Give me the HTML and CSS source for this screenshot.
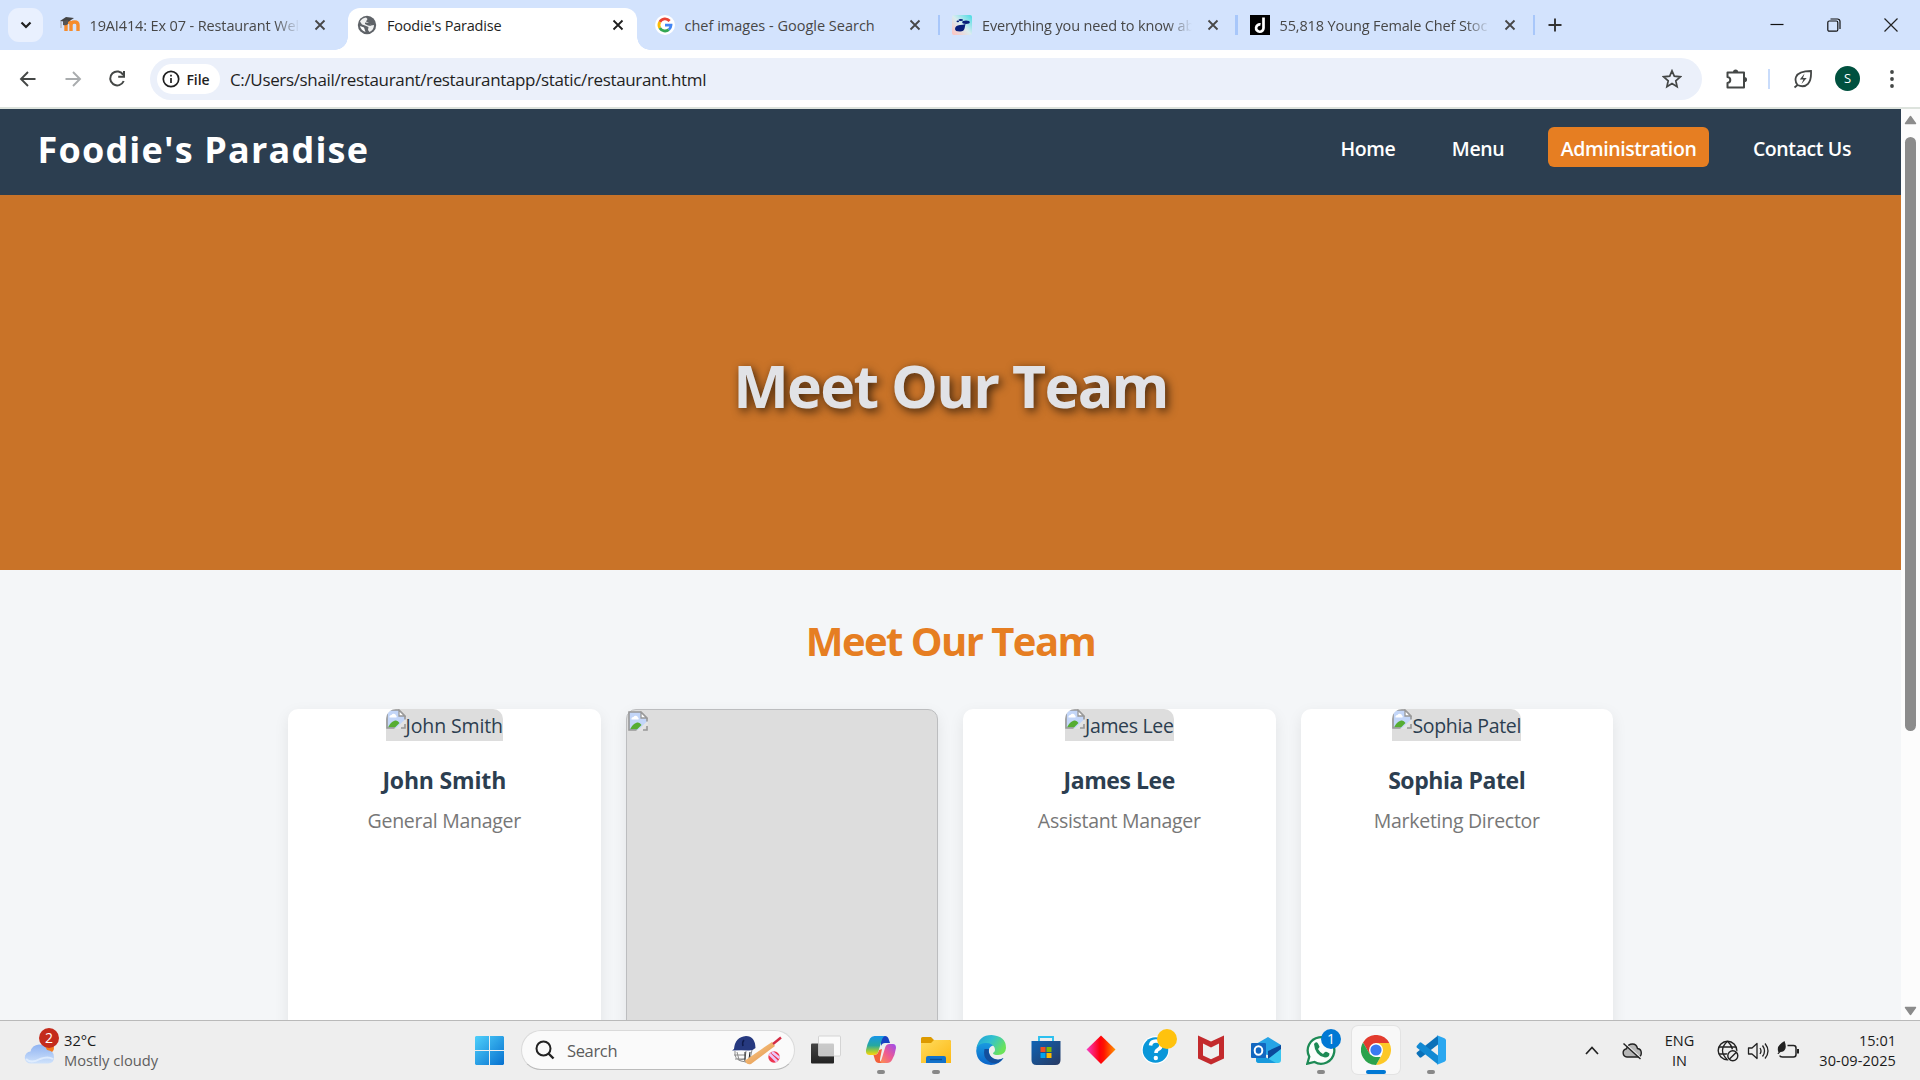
FILE: index.html
```html
<!DOCTYPE html>
<html lang="en">
<head>
<meta charset="utf-8">
<title>Foodie's Paradise</title>
<link rel="stylesheet" href="styles.css">
</head>
<body>
<svg class="defs" width="0" height="0" aria-hidden="true">
  <defs>
    <linearGradient id="win" x1="0" y1="0" x2="1" y2="1"><stop offset="0" stop-color="#4fd0fb"/><stop offset="1" stop-color="#0670cf"/></linearGradient>
    <linearGradient id="cloud" x1="0" y1="0" x2="0" y2="1"><stop offset="0" stop-color="#8fb3f2"/><stop offset="1" stop-color="#cfe2fb"/></linearGradient>
    <linearGradient id="fold" x1="0" y1="0" x2="1" y2="1"><stop offset="0" stop-color="#ffdc5e"/><stop offset="1" stop-color="#fdb813"/></linearGradient>
    <linearGradient id="cpA" x1="0" y1="0" x2="0" y2="1"><stop offset="0" stop-color="#1795e8"/><stop offset=".5" stop-color="#26a8a0"/><stop offset=".8" stop-color="#a5cc35"/><stop offset="1" stop-color="#ffd20a"/></linearGradient>
    <linearGradient id="cpB" x1="1" y1="0" x2="0" y2="1"><stop offset="0" stop-color="#9a4bf0"/><stop offset=".5" stop-color="#ee5a92"/><stop offset="1" stop-color="#ff9a44"/></linearGradient>
    <linearGradient id="edA" x1="0" y1="0" x2="1" y2=".5"><stop offset="0" stop-color="#1f9fd8"/><stop offset=".5" stop-color="#32c1cf"/><stop offset="1" stop-color="#6be35a"/></linearGradient>
    <linearGradient id="edB" x1="0" y1="0" x2="0" y2="1"><stop offset="0" stop-color="#1ba0e2"/><stop offset="1" stop-color="#0a63c9"/></linearGradient>
    <linearGradient id="store" x1="0" y1="0" x2="1" y2="1"><stop offset="0" stop-color="#0f63b5"/><stop offset="1" stop-color="#283a62"/></linearGradient>
    <linearGradient id="dia" x1="0" y1="0" x2="1" y2="0"><stop offset="0" stop-color="#f73ec8"/><stop offset=".45" stop-color="#ff0010"/><stop offset=".6" stop-color="#ff1500"/><stop offset="1" stop-color="#ff9500"/></linearGradient>
    <linearGradient id="dark" x1="0" y1="0" x2="0" y2="1"><stop offset="0" stop-color="#444"/><stop offset="1" stop-color="#222"/></linearGradient>
    <linearGradient id="paw" x1="0" y1="1" x2="1" y2="0"><stop offset="0" stop-color="#ffc0bd"/><stop offset=".5" stop-color="#d9ecf0"/><stop offset="1" stop-color="#45dbe3"/></linearGradient>
    <linearGradient id="bat" x1="0" y1="0" x2="1" y2="1"><stop offset="0" stop-color="#ffd08e"/><stop offset="1" stop-color="#de8e45"/></linearGradient>
    <symbol id="x" viewBox="0 0 12 12"><path d="M1.500 1.500l9 9M10.500 1.500l-9 9" stroke="currentColor" stroke-width="1.800" fill="none"/></symbol>
    <symbol id="broken" viewBox="0 0 20 20">
      <path d="M1 1h12l6 6v5l-7 7H1z" fill="#c3d6f8"/>
      <path d="M3.500 8.500a2 2 0 0 1 2-2.500 2.500 2.500 0 0 1 4.500.5 1.500 1.500 0 0 1 .5 2z" fill="#fff"/>
      <path d="M2 18.500C4 14 7.500 11.500 10 11.500q2 0 3.500 2.500L9 18.500z" fill="#56ad32"/>
      <path d="M9 20L20 9.500v4.500l-6 6z" fill="#e4e4e4"/>
      <path d="M8.500 19H1V1h12l6 6v3.500M19 15v4h-4" fill="none" stroke="#989898" stroke-width="1.600"/>
      <path d="M13 1.300v5.700h5.700z" fill="#fff" stroke="#989898" stroke-width="1.300"/>
    </symbol>
  </defs>
</svg>

<div class="screen">
  <header class="tabstrip">
    <button class="tab-search"><svg width="12" height="8" viewBox="0 0 12 8"><path d="M1.500 1.500L6 6l4.500-4.500" fill="none" stroke="#1f1f1f" stroke-width="2.200"/></svg></button>
    <div class="tabs">
      <div class="tab">
        <svg class="fav" viewBox="0 0 20 20"><path d="M5 17V11q0-3 2.500-3T10 11v6M10 17v-6q0-3 3.500-3t3.500 3v6" transform="translate(1 -1)" fill="none" stroke="#f68c2c" stroke-width="3.400"/><path d="M0 6l6-4 8 1-6 4z" fill="#444"/><path d="M3 6v4q3 1 5-1V5z" fill="#555"/><path d="M1 6v7" stroke="#999" stroke-width=".8"/></svg>
        <span class="label fade t1">19AI414: Ex 07 - Restaurant Wel</span><svg class="close"><use href="#x"/></svg>
      </div>
      <div class="tab active">
        <svg class="fav" viewBox="0 0 20 20"><circle cx="10" cy="10" r="9.200" fill="#5f6368"/><path d="M3 6.500Q5 3 9 2.500L10.500 4 9 6.500l3 1.500 2 2.500 3-.5q0 5-4.500 7L11 15l.5-3L8 10.500 5 9.500z" fill="#fff" opacity=".9"/><path d="M8 7.500l5 .5 1 3-3-.500-3-1.500z" fill="#5f6368"/><path d="M3 11l4 1.500L8.500 17Q4 15.500 3 11z" fill="#fff"/></svg>
        <span class="label t2">Foodie's Paradise</span><svg class="close"><use href="#x"/></svg>
      </div>
      <div class="tab">
        <svg class="fav" viewBox="0 0 20 20"><circle cx="10" cy="10" r="10" fill="#fff"/><g fill="none" stroke-width="2.800"><path d="M14.600 6A6 6 0 0 0 4.800 7" stroke="#ea4335"/><path d="M4.800 7a6 6 0 0 0 0 6" stroke="#fbbc05"/><path d="M4.800 13a6 6 0 0 0 9 1.600" stroke="#34a853"/><path d="M13.800 14.600A6 6 0 0 0 16 10.200H10" stroke="#4285f4"/></g></svg>
        <span class="label t3">chef images - Google Search</span><svg class="close"><use href="#x"/></svg>
      </div>
      <div class="tab sep">
        <svg class="fav" viewBox="0 0 20 20"><rect width="20" height="20" rx="2" fill="url(#paw)"/><path d="M3 14q0-3.500 5-4 3-.2 5.500-1-.5 2-.8 4Q12 16.500 8 16.500q-5 0-5-2.500z" fill="#0a1f7a"/><ellipse cx="14" cy="7.300" rx="3.800" ry="1.700" fill="#0a1f7a"/><ellipse cx="8.800" cy="5" rx="2.300" ry="1.100" fill="#0a1f7a"/><ellipse cx="5.800" cy="6.300" rx="1.300" ry=".9" fill="#0a1f7a"/></svg>
        <span class="label fade t4">Everything you need to know ab</span><svg class="close"><use href="#x"/></svg>
      </div>
      <div class="tab sep">
        <svg class="fav" viewBox="0 0 20 20"><rect width="20" height="20" fill="#000"/><path d="M13.500 2.500V13a3.700 3.700 0 1 1-3-3.600" fill="none" stroke="#fff" stroke-width="2.700"/></svg>
        <span class="label fade t5">55,818 Young Female Chef Stoc</span><svg class="close"><use href="#x"/></svg>
      </div>
      <div class="newtab"><svg width="14" height="14" viewBox="0 0 14 14"><path d="M7 .5v13M.5 7h13" stroke="#333" stroke-width="1.900"/></svg></div>
    </div>
    <div class="winbtns">
      <svg viewBox="0 0 14 14"><path d="M.5 6.500h13" stroke="#111" stroke-width="1.200"/></svg>
      <svg viewBox="0 0 14 14"><rect x=".8" y="3" width="10" height="10.200" rx="1.500" fill="none" stroke="#111" stroke-width="1.200"/><path d="M3.500 1h7a2.500 2.500 0 0 1 2.500 2.500V11" fill="none" stroke="#111" stroke-width="1.200"/></svg>
      <svg viewBox="0 0 14 14"><path d="M.5.5l13 13M13.500.5l-13 13" stroke="#222" stroke-width="1.200"/></svg>
    </div>
  </header>

  <div class="toolbar">
    <div class="nav-icons">
      <svg viewBox="0 0 20 20"><path d="M17.500 10H3.500M10 3L3 10l7 7" fill="none" stroke="#444746" stroke-width="1.900"/></svg>
      <svg viewBox="0 0 20 20"><path d="M2.500 10h14M10 3l7 7-7 7" fill="none" stroke="#a9acae" stroke-width="1.900"/></svg>
      <svg viewBox="0 0 20 20"><path d="M16.300 6A7 7 0 1 0 16.700 12" fill="none" stroke="#444746" stroke-width="2"/><path d="M17 2v5.800h-5.800" fill="none" stroke="#444746" stroke-width="2"/></svg>
    </div>
    <div class="omnibox">
      <div class="chip"><svg viewBox="0 0 18 18"><circle cx="9" cy="9" r="7.700" fill="none" stroke="#1f1f1f" stroke-width="1.700"/><path d="M9 8v5M9 4.800v1.700" stroke="#1f1f1f" stroke-width="1.700"/></svg><span>File</span></div>
      <span class="url">C:/Users/shail/restaurant/restaurantapp/static/restaurant.html</span>
      <svg class="star" viewBox="0 0 20 20"><path d="M10 1.800l2.300 5.400 6 .6-4.500 4 1.300 5.900L10 14.600l-5.100 3.100L6.200 11.800l-4.500-4 6-.6z" fill="none" stroke="#444746" stroke-width="1.700"/></svg>
    </div>
    <div class="tools">
      <svg class="puzzle" viewBox="0 0 22 22"><path d="M2.500 4.500H19v15H2.500v-4.600q2.800-.4 2.800-2.900T2.500 9.100z" fill="none" stroke="#444746" stroke-width="2" stroke-linejoin="round"/><path d="M8 4a2.600 2.600 0 0 1 5.200 0zM19.500 9a2.600 2.600 0 0 1 0 5.200z" fill="#444746"/></svg>
      <i class="tdiv"></i>
      <svg class="leaf" viewBox="0 0 20 20"><path d="M1.500 18.500L4.500 16Q1.500 12 3 8 5.500 2 18 2q.5 9-3 12.800Q11 19 4.500 16" fill="none" stroke="#444746" stroke-width="1.800"/><path d="M11.500 4.500L6.800 10.500h3.600L8.500 15l5.200-6H10z" fill="#444746"/></svg>
      <span class="avatar">S</span>
      <svg class="dots" viewBox="0 0 4 18"><circle cx="2" cy="2" r="1.900"/><circle cx="2" cy="9" r="1.900"/><circle cx="2" cy="16" r="1.900"/></svg>
    </div>
  </div>

  <div class="viewport">
    <main class="page">
      <nav class="navbar">
        <div class="logo">Foodie's Paradise</div>
        <div class="links"><a>Home</a><a>Menu</a><a class="current">Administration</a><a>Contact Us</a></div>
      </nav>
      <section class="hero"><h1>Meet Our Team</h1></section>
      <section class="team">
        <h2>Meet Our Team</h2>
        <div class="cards">
          <article class="card"><div class="photo wide"><svg><use href="#broken"/></svg><span>John Smith</span></div><h3 class="wide">John Smith</h3><p>General Manager</p></article>
          <article class="card missing"><svg><use href="#broken"/></svg></article>
          <article class="card"><div class="photo"><svg><use href="#broken"/></svg><span>James Lee</span></div><h3>James Lee</h3><p>Assistant Manager</p></article>
          <article class="card"><div class="photo"><svg><use href="#broken"/></svg><span>Sophia Patel</span></div><h3>Sophia Patel</h3><p>Marketing Director</p></article>
        </div>
      </section>
    </main>
    <aside class="scrollbar">
      <svg viewBox="0 0 14 10"><path d="M7 .5q.6 0 1 .6l5 7q.6 1.400-.6 1.400H1.600Q.4 9.500 1 8.100l5-7Q6.400.5 7 .5z"/></svg>
      <i class="thumb"></i>
      <svg viewBox="0 0 14 10"><path d="M7 9.500q-.6 0-1-.6l-5-7Q.4.5 1.600.5h10.800q1.200 0 .6 1.400l-5 7q-.4.600-1 .6z"/></svg>
    </aside>
  </div>

  <footer class="taskbar">
    <div class="weather">
      <div class="wicon"><svg viewBox="0 0 32 26"><circle cx="25" cy="9" r="5" fill="#f47a1f"/><path d="M7 24.500a6 6 0 0 1-.5-12Q8 6 15 5.500q6 0 8 5.500 7 .5 7 7t-6 6.500z" fill="url(#cloud)"/><path d="M2 20q5 5 14 0 8-3 13 0" fill="none" stroke="#e9f3ff" stroke-width="2" opacity=".7"/></svg><b>2</b></div>
      <div class="wtext"><span>32°C</span><em>Mostly cloudy</em></div>
    </div>
    <div class="apps">
      <svg class="start" viewBox="0 0 29 29"><path d="M1 0h13v14H0V1zM15 0h13l1 1v13H15zM0 15h14v14H1l-1-1zM15 15h14v13l-1 1H15z" fill="url(#win)"/></svg>
      <div class="search">
        <svg class="mag" viewBox="0 0 20 20"><circle cx="8.500" cy="8.500" r="7" fill="none" stroke="#222" stroke-width="2"/><path d="M13.500 13.500l5 5" stroke="#222" stroke-width="2.400"/></svg>
        <span>Search</span>
        <svg class="cricket" viewBox="0 0 50 30"><path d="M3 16q-1 8 6 10l5 1M5 17l2 8 6-1 1-8M2 20h12M3 24h10M20 15l-2 9-5 3" fill="none" stroke="#8a8a8a" stroke-width="1"/><path d="M13 17v9M18 17l-1 7" stroke="#222" stroke-width="1"/><path d="M2 14Q3 2 14 1q9 0 9.500 12-3 3-8 2.500T0 15.500z" fill="#26397f"/><path d="M12 5q-2 2-1 6" stroke="#101c4d" stroke-width="1.600" fill="none"/><path d="M13 25.500L40 7l3 4-24 18q-4 1.500-6-3.500z" fill="url(#bat)"/><path d="M41 9l8-6.500" stroke="#d42b43" stroke-width="2.400"/><circle cx="42" cy="22" r="5.700" fill="#ef3550"/><path d="M37.500 19l7.500 7.500M40 17l7.500 6" stroke="#e9c8fa" stroke-width="2.500"/></svg>
      </div>
      <div class="app"><svg viewBox="0 0 30 30"><rect x="0" y="8.500" width="23" height="20" rx="1" fill="url(#dark)"/><rect x="7.500" y="1" width="22" height="20" rx="1" fill="#fff" fill-opacity=".72" stroke="#ccc" stroke-width=".8"/></svg></div>
      <div class="app run"><svg viewBox="0 0 30 30"><path d="M15 1h4q3 0 4 4l1 3h-5q-3 0-4 3z" fill="#1741c2"/><path d="M8.500 1H19q-2.500 1-3.500 5l-3 10q-1 4-4.500 4H3.500Q-.500 20 0 15q1-6 4-11.500Q5.500 1 8.500 1z" fill="url(#cpA)"/><path d="M21 28H12q3-1 4-5l3-10q1-4 4.500-4H27q3 0 3 4-1 7-4 12-1.500 3-5 3z" fill="url(#cpB)"/><path d="M13 28q-3 0-4-3l-1.500-5Q12 20.500 13 15l3-1-2 10q-.5 3 2 4z" fill="#f2603a"/></svg></div>
      <div class="app run"><svg viewBox="0 0 30 30"><path d="M0 3.500Q0 2 1.500 2H10l3 3h15q2 0 2 2v4H0z" fill="#dd9a00"/><path d="M0 8h10l3-3h15q2 0 2 2v21H0z" fill="url(#fold)"/><path d="M5 28v-5q0-2 2-2h16q2 0 2 2v5z" fill="#1272cb"/><path d="M9 24.500h12" stroke="#0a4e96" stroke-width="1.300"/></svg></div>
      <div class="app"><svg viewBox="0 0 30 30"><path d="M.2 16Q0 8 8 6q10-2 13 5-6-2-8 3-1 7 5 10 5 2 9.500-1Q23 30 15 30 1 29 .2 16z" fill="url(#edB)"/><path d="M8.500 14q-2 9 5 13 8 4 14-4-5 3-10 .5-6-3.500-4.500-9.500z" fill="#134f9d"/><path d="M.5 13Q3 0 15.500 0 30 1 30 13q-.5 7-8 7-5 0-5-2 3-2 1.500-5.500Q16 7.500 9 8q-6 .5-8.500 5z" fill="url(#edA)"/></svg></div>
      <div class="app"><svg viewBox="0 0 30 30"><path d="M8 8V2h14v6" fill="none" stroke="#2cc0ef" stroke-width="1.900"/><path d="M.5 6h29v19q0 5-5 5h-19q-5 0-5-5z" fill="url(#store)"/><path d="M9.500 12h5v5h-5z" fill="#f25022"/><path d="M15.500 12h5v5h-5z" fill="#7fba00"/><path d="M9.500 18h5v5h-5z" fill="#00a4ef"/><path d="M15.500 18h5v5h-5z" fill="#ffb900"/></svg></div>
      <div class="app"><svg viewBox="0 0 30 30"><path d="M15 .5L29.500 14.500 15 29 .5 14.500z" fill="url(#dia)"/></svg></div>
      <div class="app"><svg viewBox="0 0 30 30"><circle cx="14.500" cy="15" r="14" fill="#fff"/><circle cx="14.500" cy="15" r="12.800" fill="#0a97d9"/><path d="M9.500 10.500Q10 6 15 6t5 4.200q0 2.800-3 4.300-2 1-2 3.500" fill="none" stroke="#fff" stroke-width="3.600"/><circle cx="14.800" cy="23" r="2.200" fill="#fff"/></svg><b class="badge gold"></b></div>
      <div class="app"><svg viewBox="0 0 30 30"><path d="M2 .5l13 6 13-6v23L15 29.500 2 23.500zM7 8.500v12l8 3.700 8-3.700v-12l-8 4z" fill="#c32a2d" fill-rule="evenodd"/></svg></div>
      <div class="app"><svg viewBox="0 0 30 30"><path d="M5 9L17 2l13 8v3L17 20 5 18z" fill="#26a4e6"/><path d="M30 10v8l-13 8V16z" fill="#0b4a9c"/><path d="M5 17l12 7L30 14v11q0 3-3 3H8q-3 0-3-3z" fill="#3ac5f0"/><path d="M5 17l20 11H8q-3 0-3-3z" fill="#1899dc"/><rect x="0" y="8" width="15" height="15" rx="1" fill="#1267c0"/><ellipse cx="7.500" cy="15.500" rx="3.800" ry="4.300" fill="none" stroke="#fff" stroke-width="2"/></svg></div>
      <div class="app run"><svg viewBox="0 0 30 30"><path d="M1.300 28.700l2-7A13.300 13.300 0 1 1 8.500 27z" fill="#fbfdfb" stroke="#1d8a55" stroke-width="2.300"/><path d="M8 9q2-3 4-.5l1.500 3q0 1-1.500 2.500 2 3.500 5 5l2-2q1-.5 2 0l2.500 1.500q0 4-4.500 4Q9 21 8 9z" fill="#1d8a55"/></svg><b class="badge">1</b></div>
      <div class="app run focus"><svg viewBox="0 0 30 30"><path d="M15 8h13.300A15 15 0 0 1 15 30l6.300-11z" fill="#fdc827"/><path d="M2 7.500A15 15 0 0 1 28.300 8H15L8.500 19z" fill="#e33b2e"/><path d="M2 7.500L8.700 19l6.300 3h4.500L15 30A15 15 0 0 1 2 7.500z" fill="#2ba24c"/><circle cx="15" cy="15" r="7" fill="#fff"/><circle cx="15" cy="15" r="5.600" fill="#3a7af0"/></svg></div>
      <div class="app run"><svg viewBox="0 0 30 30"><path d="M.7 19L3.500 22.300Q4.500 23 5.500 22.300L22 9.500V.5L1 17.300Q.2 18 .7 19z" fill="#0b70b8"/><path d="M.7 11L3.500 7.700Q4.500 7 5.500 7.700L22 20.500v9L1 12.700Q.2 12 .7 11z" fill="#1289d3"/><path d="M21 .3L28.500 3.300q1.500.8 1.500 2v19.400q0 1.200-1.500 2L21 29.700q1-1 1-3V3.500q0-2-1-3.200z" fill="#2aa7f0"/></svg></div>
    </div>
    <div class="tray">
      <svg class="chev" viewBox="0 0 14 9"><path d="M1 8l6-6.500L13 8" fill="none" stroke="#222" stroke-width="1.700"/></svg>
      <svg class="od" viewBox="0 0 20 18"><path d="M5 15a4.200 4.200 0 0 1-.5-8.300Q6 2 10.500 2q4 0 5 4.500Q19.300 7 19.300 11T15.500 15z" fill="#b6b6b6" stroke="#222" stroke-width="1.400"/><path d="M2.500 1l16.500 15" stroke="#eee" stroke-width="1.400"/><path d="M1.500 1.500l17 15.500" stroke="#222" stroke-width="1.400"/></svg>
      <div class="lang"><span>ENG</span><span>IN</span></div>
      <div class="status">
        <svg viewBox="0 0 22 22"><circle cx="10.500" cy="10.500" r="9.300" fill="none" stroke="#222" stroke-width="1.400"/><path d="M2 7h17M2 14h9M10.500 1.200q-5 4.500-5 9.300t5 9.300M10.500 1.200q4 3.500 5 8.300" fill="none" stroke="#222" stroke-width="1.300"/><circle cx="15.800" cy="15.800" r="6.300" fill="#eee"/><circle cx="15.800" cy="15.800" r="5" fill="none" stroke="#222" stroke-width="1.400"/><path d="M12.500 19l6.600-6.600" stroke="#222" stroke-width="1.400"/></svg>
        <svg viewBox="0 0 22 22"><path d="M1.500 8H5l5-4.500v15L5 14H1.500z" fill="none" stroke="#222" stroke-width="1.300" stroke-linejoin="round"/><path d="M13 8q2 3 0 6M15.500 5.500q4 5.500 0 11M18 3.500q6 7.500 0 15" fill="none" stroke="#222" stroke-width="1.300"/></svg>
        <svg viewBox="0 0 22 22"><path d="M10.500 5.500h6q2.500 0 2.500 2.500v6.500q0 2.500-2.500 2.500H5.500Q3 17 3 15.500" fill="none" stroke="#222" stroke-width="1.500"/><path d="M20 9h2v4.500h-2z" fill="#222"/><path d="M1.500 12.500Q-.5 7.500 3 4.500 4.500 2.500 7.500 1q2 5 .8 8-1.300 3-4.800 3L1.500 14H.3z" fill="#222"/></svg>
      </div>
      <div class="clock"><span>15:01</span><span class="date">30-09-2025</span></div>
    </div>
  </footer>
</div>
</body>
</html>
```
FILE: styles.css
```css
* { box-sizing: border-box; margin: 0; padding: 0; }
body { width: 1920px; height: 1080px; overflow: hidden; font-family: "Open Sans", "Noto Sans", sans-serif; }
.defs { position: absolute; }
svg { display: block; flex: none; }
span, a, h1, h2, h3, p { white-space: nowrap; }
.screen { width: 1920px; height: 1080px; display: flex; flex-direction: column; }

/* Tab strip */
.tabstrip { height: 50px; background: #d3e3fd; display: flex; align-items: center; flex: none; }
.tab-search { width: 35px; height: 34px; margin-left: 8px; border: 0; border-radius: 11px; background: #e9f0fe; display: flex; align-items: center; justify-content: center; }
.tabs { display: flex; margin-left: 7.500px; height: 50px; padding-top: 8px; }
.tab { position: relative; width: 289px; height: 42px; margin-right: 8.500px; padding: 0 13.500px 8px 9px; display: flex; align-items: center; border-radius: 12px 12px 0 0; color: #474747; }
.tab.active { background: #fff; color: #1f1f1f; }
.tab.active::before, .tab.active::after { content: ""; position: absolute; bottom: 0; width: 13px; height: 13px; }
.tab.active::before { left: -13px; background: radial-gradient(circle at 0 0, transparent 12.500px, #fff 13px); }
.tab.active::after { right: -13px; background: radial-gradient(circle at 100% 0, transparent 12.500px, #fff 13px); }
.tab.sep::before, .tab.sep::after { content: ""; position: absolute; top: 7px; left: -5px; width: 2px; height: 20px; background: #a8c7fa; }
.tab.sep::after { left: auto; right: -5px; }
.fav { width: 20px; height: 20px; margin-right: 10px; }
.label { width: 212px; font-size: 14.500px; line-height: 24px; padding-top: 1px; }
.fade { -webkit-mask-image: linear-gradient(90deg, #000 185px, transparent 210px); mask-image: linear-gradient(90deg, #000 185px, transparent 210px); }
.t1, .t4, .t5 { letter-spacing: -.13px; }
.t2 { letter-spacing: -.2px; }
.close { width: 12px; height: 12px; margin-left: auto; }
.newtab { width: 34px; height: 34px; display: flex; align-items: center; justify-content: center; }
.winbtns { margin-left: auto; display: flex; gap: 43px; padding-right: 22px; }
.winbtns svg { width: 14px; height: 14px; }

/* Address bar */
.toolbar { height: 59px; background: #fff; border-bottom: 2px solid #dde3dd; display: flex; align-items: center; flex: none; }
.nav-icons { display: flex; gap: 24.500px; padding-left: 18px; width: 150px; }
.nav-icons svg { width: 20px; height: 20px; }
.omnibox { width: 1552px; height: 42px; border-radius: 21px; background: #ebf0fa; display: flex; align-items: center; padding: 0 20px 0 7px; margin-top: 1px; }
.chip { width: 63px; height: 30px; border-radius: 15px; background: #fff; display: flex; align-items: center; padding-left: 5px; font-size: 14px; font-weight: 600; letter-spacing: -.1px; color: #1f1f1f; }
.chip svg { width: 18px; height: 18px; margin-right: 6.500px; }
.url { margin-left: 10px; font-size: 17px; letter-spacing: -.35px; color: #1f1f1f; line-height: 24px; padding-top: 1px; }
.star { width: 20px; height: 20px; margin-left: auto; }
.tools { display: flex; align-items: center; padding-left: 23px; }
.puzzle { width: 22px; height: 22px; }
.tdiv { width: 2px; height: 20px; background: #c9dcfb; margin: 0 23px 0 21px; }
.leaf { width: 20px; height: 20px; }
.avatar { width: 25px; height: 25px; border-radius: 50%; background: #00513f; color: #fff; font-size: 13px; line-height: 25px; text-align: center; margin: 0 30px 0 22px; }
.dots { width: 4px; height: 18px; fill: #444746; }

/* Page */
.viewport { height: 911px; display: flex; flex: none; overflow: hidden; }
.page { width: 1901px; height: 911px; background: #f4f6f8; overflow: hidden; }
.navbar { height: 86px; background: #2c3e50; display: flex; align-items: flex-start; justify-content: space-between; padding: 18px 37.500px; }
.logo { color: #fff; font-size: 36px; font-weight: 700; line-height: 45px; letter-spacing: 1.180px; }
.links { display: flex; gap: 31.500px; }
.links a { height: 40px; line-height: 43px; padding: 0 12.500px; font-size: 19.500px; letter-spacing: -.4px; font-weight: 600; color: #fff; border-radius: 6px; }
.links a.current { background: #e67e22; }
.hero { height: 375px; background: #c97328; display: flex; align-items: center; justify-content: center; }
.hero h1 { font-size: 59px; font-weight: 700; letter-spacing: -1.700px; color: #e1e2e6; line-height: 80px; text-shadow: 2.500px 2.500px 10px rgba(0,0,0,.7); margin-top: 5px; }
.team { padding: 44px 288px 0; }
.team h2 { text-align: center; color: #e67e22; font-size: 40px; letter-spacing: -1.550px; line-height: 54px; font-weight: 700; }
.cards { display: grid; grid-template-columns: repeat(4, 1fr); gap: 25px; margin-top: 41px; }
.card { height: 400px; background: #fff; border-radius: 10px; box-shadow: 0 5px 15px rgba(0,0,0,.08); display: flex; flex-direction: column; align-items: center; color: #2c3e50; }
.card.missing { background: #ddd; border: 1px solid #bcbdbf; align-items: flex-start; padding: 1px; }
.card svg { width: 20px; height: 20px; }
.photo { height: 32px; background: #ddd; border-radius: 10px 10px 0 0; overflow: hidden; display: flex; font-size: 19.500px; line-height: 34px; letter-spacing: -.33px; }
.photo.wide { letter-spacing: -.12px; }
.card h3 { margin-top: 21px; font-size: 23px; font-weight: 700; line-height: 36px; letter-spacing: -.43px; }
.card h3.wide { letter-spacing: -.17px; }
.card p { margin-top: 6px; font-size: 19.500px; line-height: 34px; letter-spacing: -.28px; color: #777; }
.scrollbar { width: 19px; background: #fcfcfc; display: flex; flex-direction: column; align-items: center; padding: 6px 0 4px; }
.scrollbar svg { width: 13px; height: 10px; fill: #8b8b8b; }
.thumb { width: 11px; height: 594px; border-radius: 6px; background: #8b8b8b; margin-top: 12px; margin-bottom: auto; }

/* Taskbar */
.taskbar { height: 60px; background: #eee; border-top: 1px solid #b9b9b9; display: flex; flex: none; }
.weather { width: 475px; display: flex; padding-left: 24px; }
.wicon { position: relative; width: 40px; }
.wicon svg { width: 32px; height: 26px; margin-top: 18px; }
.wicon b { position: absolute; left: 15px; top: 7px; width: 20px; height: 20px; border-radius: 50%; background: #c42b1c; color: #fff; font: 14px/20px "Open Sans", sans-serif; text-align: center; }
.wtext { display: flex; flex-direction: column; font-size: 14.700px; line-height: 20px; padding-top: 9px; color: #1b1b1b; }
.wtext em { font-style: normal; color: #5e5e5e; }
.apps { display: flex; }
.start { width: 29px; height: 29px; margin-top: 15px; }
.search { width: 274px; height: 40px; margin: 9px 7px 0 17px; border-radius: 20px; background: #fafafa; border: 1px solid #dadada; border-bottom-color: #bbb; display: flex; align-items: center; padding-left: 13px; color: #5c5c5c; font-size: 16.500px; letter-spacing: -.35px; }
.mag { width: 20px; height: 20px; margin-right: 12px; }
.cricket { width: 50px; height: 30px; margin-left: auto; margin-right: 12px; }
.app { position: relative; width: 48px; height: 48px; margin: 5px 7px 0 0; display: flex; align-items: center; justify-content: center; border-radius: 6px; }
.app svg { width: 30px; height: 30px; }
.app.run::after { content: ""; position: absolute; bottom: 0; left: 20px; width: 8px; height: 4px; border-radius: 2px; background: #888; }
.app.focus { background: #f8f8f8; box-shadow: 0 0 0 1px #e3e3e3; }
.app.focus::after { left: 14px; width: 20px; background: #0078d4; }
.badge { position: absolute; right: 4px; top: 3px; width: 20px; height: 20px; border-radius: 50%; background: #0078d4; color: #fff; font: 14px/20px "Open Sans", sans-serif; text-align: center; }
.badge.gold { background: #ffc20e; right: 3px; }
.tray { margin-left: auto; display: flex; align-items: center; padding-right: 24px; font-size: 14.500px; line-height: 20px; color: #1b1b1b; }
.chev { width: 14px; height: 9px; }
.od { width: 20px; height: 18px; margin-left: 23px; }
.lang { display: flex; flex-direction: column; align-items: center; width: 75px; }
.status { display: flex; gap: 8px; width: 101px; }
.status svg { width: 22px; height: 22px; }
.clock { display: flex; flex-direction: column; align-items: flex-end; width: 78px; }
.date { letter-spacing: .1px; }
```
